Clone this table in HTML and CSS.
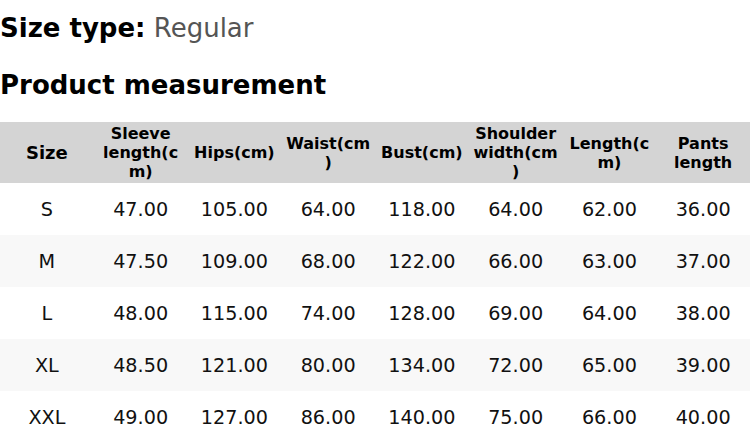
FILE: index.html
```html
<!DOCTYPE html>
<html lang="en">
<head>
<meta charset="utf-8">
<title>Size chart</title>
<link rel="stylesheet" href="styles.css">
</head>
<body>
<div class="chart">
  <p class="size-type"><span class="label">Size type:</span> <span class="value">Regular</span></p>
  <h2 class="title">Product measurement</h2>
  <table class="measure">
    <thead>
      <tr>
        <th class="size-col">Size</th>
        <th>Sleeve length(cm)</th>
        <th>Hips(cm)</th>
        <th>Waist(cm)</th>
        <th>Bust(cm)</th>
        <th>Shoulder width(cm)</th>
        <th>Length(cm)</th>
        <th>Pants length</th>
      </tr>
    </thead>
    <tbody>
      <tr><td>S</td><td>47.00</td><td>105.00</td><td>64.00</td><td>118.00</td><td>64.00</td><td>62.00</td><td>36.00</td></tr>
      <tr><td>M</td><td>47.50</td><td>109.00</td><td>68.00</td><td>122.00</td><td>66.00</td><td>63.00</td><td>37.00</td></tr>
      <tr><td>L</td><td>48.00</td><td>115.00</td><td>74.00</td><td>128.00</td><td>69.00</td><td>64.00</td><td>38.00</td></tr>
      <tr><td>XL</td><td>48.50</td><td>121.00</td><td>80.00</td><td>134.00</td><td>72.00</td><td>65.00</td><td>39.00</td></tr>
      <tr><td>XXL</td><td>49.00</td><td>127.00</td><td>86.00</td><td>140.00</td><td>75.00</td><td>66.00</td><td>40.00</td></tr>
    </tbody>
  </table>
</div>
</body>
</html>
```
FILE: styles.css
```css
html, body {
  margin: 0;
  padding: 0;
  background: #ffffff;
}
body {
  font-family: "DejaVu Sans", sans-serif;
  color: #000;
}
.chart {
  width: 750px;
}
.size-type {
  margin: 0;
  padding-top: 13px;
  font-size: 26px;
  line-height: 30px;
}
.size-type .label {
  font-weight: bold;
}
.size-type .value {
  color: #555555;
}
.title {
  margin: 0;
  padding-top: 27px;
  font-size: 26px;
  line-height: 30px;
  font-weight: bold;
}
.measure {
  margin-top: 22px;
  width: 750px;
  border-collapse: collapse;
  table-layout: fixed;
}
.measure th {
  background: #d4d4d4;
  font-size: 16px;
  line-height: 19px;
  font-weight: bold;
  padding: 0 4px;
  height: 61px;
  text-align: center;
  overflow-wrap: break-word;
}
.measure th.size-col {
  font-size: 18px;
}
.measure td {
  font-size: 19.2px;
  height: 52px;
  padding: 0 4px;
  text-align: center;
  color: #111;
}
.measure tbody tr:nth-child(even) td {
  background: #f8f8f8;
}
```
